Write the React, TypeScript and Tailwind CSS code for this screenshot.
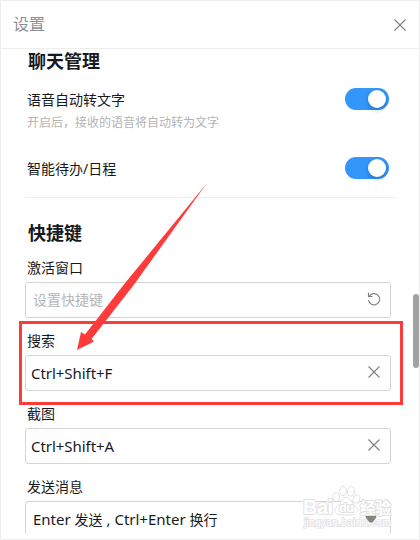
import type { ReactNode } from "react";

const ink = "text-[#17191c]";

function CloseIcon({ className }: { className?: string }) {
  return (
    <svg
      width="14"
      height="14"
      viewBox="0 0 14 14"
      fill="none"
      stroke="currentColor"
      className={className}
    >
      <path d="M1.5 1.5l11 11M12.5 1.5l-11 11" strokeWidth="1.1" />
    </svg>
  );
}

function ResetIcon() {
  return (
    <svg
      width="14"
      height="14"
      viewBox="0 0 14 14"
      fill="none"
      stroke="currentColor"
      strokeWidth="1.1"
      className="mb-0.5 text-[#7d8085]"
    >
      <path d="M2.2 4.4A5.6 5.6 0 1 1 1.5 8" />
      <path d="M1.5 .8v3.7h4" />
    </svg>
  );
}

function Toggle() {
  return (
    <button
      role="switch"
      aria-checked="true"
      className="flex h-[22px] w-11 shrink-0 items-center justify-end rounded-full bg-[#3296fa] pr-[3px]"
    >
      <span className="h-[18px] w-[18px] rounded-full bg-white shadow-[0_2px_4px_rgba(0,35,90,0.3)]" />
    </button>
  );
}

function Field({
  label,
  children,
}: {
  label: string;
  children: ReactNode;
}) {
  return (
    <div className="h-[73px] shrink-0">
      <div className={`pl-0.5 text-sm leading-[24px] ${ink}`}>{label}</div>
      <div className="mt-[2px] flex h-9 w-[366px] items-center justify-between rounded-[3px] border border-[#d5d5d6] pr-[9px] pl-[5px]">
        {children}
      </div>
    </div>
  );
}

function Watermark() {
  return (
    <svg
      width="94"
      height="46"
      viewBox="0 0 94 46"
      className="absolute top-[484px] left-[300px]"
      fill="#ffffff"
      stroke="#e2e2e2"
      strokeWidth="1"
    >
      <path d="M45 12.5c4 0 5 4 8 7s4 4 3 7-4 3.5-11 3.5-10-.5-11-3.5 1-4 4-7 3-7 7-7z" />
      <ellipse cx="35.3" cy="12" rx="3.3" ry="4.3" transform="rotate(-15 35.3 12)" />
      <ellipse cx="42" cy="6" rx="3.4" ry="4.8" />
      <ellipse cx="50" cy="6.3" rx="3.4" ry="4.8" transform="rotate(10 50 6.3)" />
      <ellipse cx="55.5" cy="14" rx="3.3" ry="4.4" transform="rotate(20 55.5 14)" />
      <g
        fontFamily="'Liberation Sans', 'Noto Sans CJK SC', sans-serif"
        fontWeight="700"
        strokeWidth="2"
        paintOrder="stroke"
      >
        <text x="2" y="29" fontSize="20" textLength="30">Bai</text>
        <text x="38" y="27" fontSize="13" textLength="15">du</text>
        <text x="59" y="28.5" fontSize="15.5" textLength="31">经验</text>
        <text x="3" y="41" fontSize="10.5" strokeWidth="1.6" textLength="87" fontWeight="400">
          jingyan.baidu.com
        </text>
      </g>
    </svg>
  );
}

export default function App() {
  return (
    <div className="relative flex h-[540px] w-[420px] flex-col overflow-hidden border border-[#eeeeef] bg-white font-['Noto_Sans','Noto_Sans_CJK_SC',sans-serif]">
      <header className="flex h-12 shrink-0 items-center justify-between border-b border-[#eeeeef] pr-3 pl-3">
        <h1 className="-mt-0.5 text-base leading-6 font-normal text-[#8d8f92]">设置</h1>
        <CloseIcon className="text-[#85807d]" />
      </header>

      <main className="flex h-[485px] shrink-0 flex-col overflow-hidden pl-6">
        <h2 className={`h-[26px] shrink-0 pl-[3px] text-lg leading-[24px] font-bold ${ink}`}>
          聊天管理
        </h2>

        <section className="mt-[13px] flex h-[69px] w-[364px] shrink-0 items-start justify-between pl-0.5">
          <div>
            <div className={`text-sm leading-6 ${ink}`}>语音自动转文字</div>
            <p className="text-xs leading-[22px] text-[#b3b4b6]">开启后，接收的语音将自动转为文字</p>
          </div>
          <Toggle />
        </section>

        <section className="flex h-10 w-[364px] shrink-0 items-start justify-between pl-0.5">
          <div className={`text-sm leading-6 ${ink}`}>智能待办/日程</div>
          <Toggle />
        </section>

        <hr className="w-[372px] shrink-0 border-[#eeeeef]" />

        <h2 className={`mt-[22px] h-9 shrink-0 pl-[3px] text-lg leading-[26px] font-bold ${ink}`}>
          快捷键
        </h2>

        <Field label="激活窗口">
          <span className="pl-0.5 text-sm text-[#b5b6b8]">设置快捷键</span>
          <ResetIcon />
        </Field>
        <Field label="搜索">
          <span className={`text-[15px] tracking-[-0.05px] ${ink}`}>Ctrl+Shift+F</span>
          <CloseIcon className="mb-0.5 text-[#7d8085]" />
        </Field>
        <Field label="截图">
          <span className={`text-[15px] tracking-[-0.05px] ${ink}`}>Ctrl+Shift+A</span>
          <CloseIcon className="mb-0.5 text-[#7d8085]" />
        </Field>
        <Field label="发送消息">
          <span className={`pl-0.5 text-[15px] ${ink}`}>
            Enter <span className="text-sm">发送</span> , Ctrl+Enter{" "}
            <span className="text-sm">换行</span>
          </span>
        </Field>
      </main>

      {/* scrollbar thumb */}
      <div className="absolute top-[293px] right-0 h-[74px] w-1.5 rounded-full bg-[#a2a2a2]" />

      <Watermark />

      <svg width="12" height="8" viewBox="0 0 12 8" className="absolute top-[514px] left-[364px]">
        <path d="M.8 .8h10.4v2L7.4 7.5H4.6L.8 2.8z" fill="#858585" />
      </svg>

      {/* highlight around the search shortcut */}
      <div className="absolute top-[320px] left-[18px] h-[84px] w-[384px] border-3 border-[#fd3b3b]" />
      <svg
        width="140"
        height="175"
        viewBox="0 0 140 175"
        className="absolute top-[179px] left-[69px]"
      >
        <path
          d="M137 3L63 106L21.5 159L24 161.5L7 170L11 152L15 154.5L53.5 105Z"
          fill="#fd3b3b"
        />
      </svg>
    </div>
  );
}
